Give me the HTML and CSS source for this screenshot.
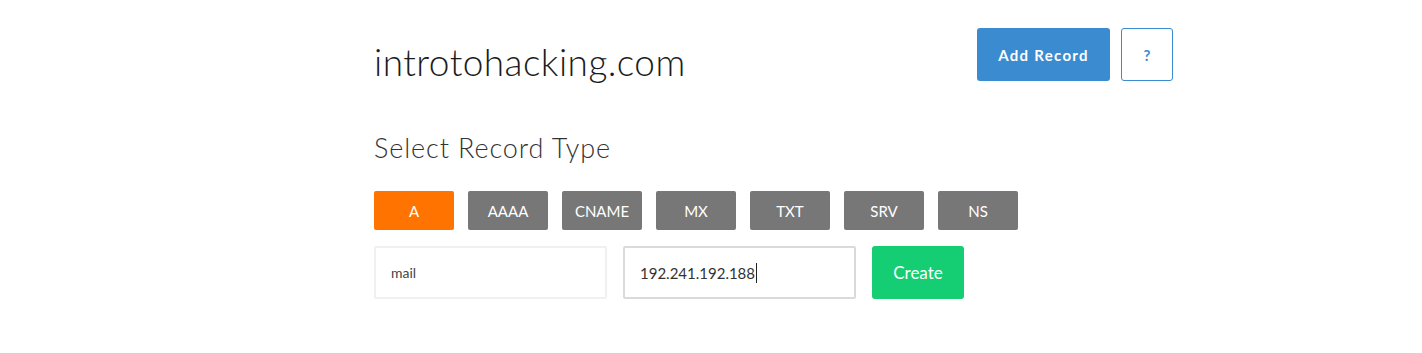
FILE: index.html
```html
<!DOCTYPE html>
<html>
<head>
<meta charset="utf-8">
<link rel="stylesheet" href="styles.css">
</head>
<body>
<div class="page">
  <div class="header">
    <h1 class="domain">introtohacking.com</h1>
    <div class="actions">
      <button class="btn-add">Add Record</button>
      <button class="btn-help">?</button>
    </div>
  </div>
  <h2 class="section-title">Select Record Type</h2>
  <div class="types">
    <button class="type active">A</button>
    <button class="type">AAAA</button>
    <button class="type">CNAME</button>
    <button class="type">MX</button>
    <button class="type">TXT</button>
    <button class="type">SRV</button>
    <button class="type">NS</button>
  </div>
  <div class="form">
    <div class="field">mail</div>
    <div class="field focused">192.241.192.188<span class="caret"></span></div>
    <button class="btn-create">Create</button>
  </div>
</div>
</body>
</html>
```
FILE: styles.css
```css
* { box-sizing: border-box; }
html, body { margin: 0; padding: 0; background: #fff; }
body { font-family: Lato, "Open Sans", sans-serif; color: #222; }
.page { width: 799px; margin-left: 374px; padding-top: 28px; }
.header { display: flex; justify-content: space-between; align-items: flex-start; height: 53px; }
.domain { margin: 0; font-weight: 300; font-size: 37px; line-height: 53px; color: #1c1c1c; letter-spacing: 0.45px; padding-top: 7px; }
.actions { display: flex; gap: 11px; }
button { font-family: inherit; cursor: pointer; }
.btn-add { width: 133px; height: 53px; background: #3a8bcf; color: #fff; border: none; border-radius: 3px; font-size: 15px; font-weight: 700; letter-spacing: 1.3px; }
.btn-help { width: 52px; height: 53px; background: #fff; color: #3a8bcf; border: 1px solid #3a8bcf; border-radius: 3px; font-size: 15px; font-weight: 700; }
.section-title { margin: 51px 0 0; font-weight: 300; font-size: 27px; line-height: 32px; color: #333; letter-spacing: 0.9px; }
.types { display: flex; gap: 14px; margin-top: 27px; }
.type { width: 80px; height: 39px; background: #777; color: #fff; border: none; border-radius: 2px; font-size: 15px; padding: 0; }
.type.active { background: #ff7300; }
.form { display: flex; gap: 16px; margin-top: 16px; }
.field { width: 233px; height: 53px; border: 2px solid #f0f0f0; border-radius: 2px; padding-left: 15px; display: flex; align-items: center; font-size: 14px; color: #444; }
.field.focused { border-color: #dadada; font-size: 15px; color: #333; }
.caret { display: inline-block; width: 1px; height: 20px; background: #222; margin-left: 1px; }
.btn-create { width: 92px; height: 53px; background: #15cd72; color: #fff; border: none; border-radius: 3px; font-size: 17px; padding: 0; }
```
